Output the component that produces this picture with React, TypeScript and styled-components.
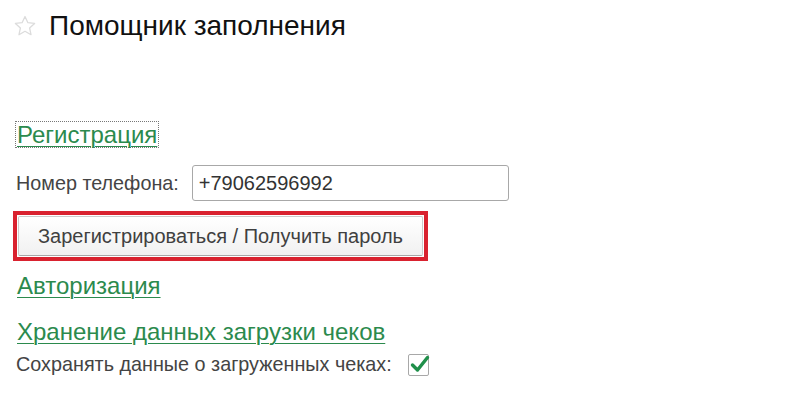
import styled, { createGlobalStyle } from "styled-components";

const GlobalStyle = createGlobalStyle`
  html, body {
    margin: 0;
    padding: 0;
    background: #ffffff;
  }
  body {
    font-family: Arial, "Liberation Sans", sans-serif;
  }
`;

const Page = styled.div`
  width: 802px;
  height: 393px;
  box-sizing: border-box;
  padding: 10px 0 0 13px;
  background: #fff;
  overflow: hidden;
`;

const Header = styled.div`
  display: flex;
  align-items: center;
  gap: 12px;
  height: 32px;
`;

const Title = styled.h1`
  margin: 0;
  font-size: 28px;
  line-height: 32px;
  font-weight: normal;
  color: #111;
`;

const Form = styled.div`
  display: flex;
  flex-direction: column;
  align-items: flex-start;
  margin-top: 79px;
`;

const SectionLink = styled.a<{ $focused?: boolean; $gap?: number }>`
  display: inline-block;
  font-size: 24px;
  line-height: 25px;
  color: #2b8a4d;
  text-decoration: underline;
  text-underline-offset: 3px;
  text-decoration-thickness: 1px;
  padding: 0 1px;
  margin-left: 2px;
  margin-top: ${(p) => p.$gap ?? 0}px;
  border: 1px dotted ${(p) => (p.$focused ? "#777" : "transparent")};
  cursor: pointer;
`;

const Row = styled.div<{ $gap: number; $top: number }>`
  display: flex;
  align-items: center;
  gap: ${(p) => p.$gap}px;
  margin-left: 3px;
  margin-top: ${(p) => p.$top}px;
`;

const Label = styled.span`
  font-size: 19.8px;
  color: #444;
`;

const PhoneInput = styled.div`
  width: 317px;
  height: 36px;
  box-sizing: border-box;
  border: 1px solid #a8a8a8;
  border-radius: 3px;
  padding: 0 6px;
  display: flex;
  align-items: center;
  font-size: 20px;
  color: #333;
`;

const Highlight = styled.div`
  border: 4px solid #d9222f;
  padding: 1px;
  margin-top: 10px;
`;

const Button = styled.div`
  width: 405px;
  height: 40px;
  box-sizing: border-box;
  border: 1px solid #cccccc;
  border-bottom-color: #a8a8a8;
  border-radius: 2px;
  background: linear-gradient(#ffffff, #f1f1f1);
  display: flex;
  align-items: center;
  justify-content: center;
  font-size: 20px;
  color: #404040;
  cursor: pointer;
`;

const Checkbox = styled.span`
  width: 21px;
  height: 22px;
  box-sizing: border-box;
  border: 1px solid #a8a8a8;
  border-radius: 2px;
  display: inline-flex;
  position: relative;
`;

const Star = () => (
  <svg width="24" height="24" viewBox="0 0 24 24" fill="none" stroke="#dcdcdc" strokeWidth="1.3" strokeLinejoin="round">
    <path d="M12 2.5l2.9 6.2 6.7.7-5 4.6 1.4 6.7L12 17.3l-6 3.4 1.4-6.7-5-4.6 6.7-.7z" />
  </svg>
);

const Check = () => (
  <svg width="22" height="22" viewBox="0 0 22 22" style={{ position: "absolute", left: 0, top: -2 }}>
    <path d="M3.5 12l5 5L18.5 4.5" fill="none" stroke="#1f8f4a" strokeWidth="3.4" strokeLinecap="round" strokeLinejoin="round" />
  </svg>
);

export default function App() {
  return (
    <Page>
      <GlobalStyle />
      <Header>
        <Star />
        <Title>Помощник заполнения</Title>
      </Header>
      <Form>
        <SectionLink $focused>Регистрация</SectionLink>
        <Row $gap={13} $top={17}>
          <Label>Номер телефона:</Label>
          <PhoneInput>+79062596992</PhoneInput>
        </Row>
        <Highlight>
          <Button>Зарегистрироваться / Получить пароль</Button>
        </Highlight>
        <SectionLink $gap={11}>Авторизация</SectionLink>
        <SectionLink $gap={19}>Хранение данных загрузки чеков</SectionLink>
        <Row $gap={16} $top={8}>
          <Label>Сохранять данные о загруженных чеках:</Label>
          <Checkbox>
            <Check />
          </Checkbox>
        </Row>
      </Form>
    </Page>
  );
}
